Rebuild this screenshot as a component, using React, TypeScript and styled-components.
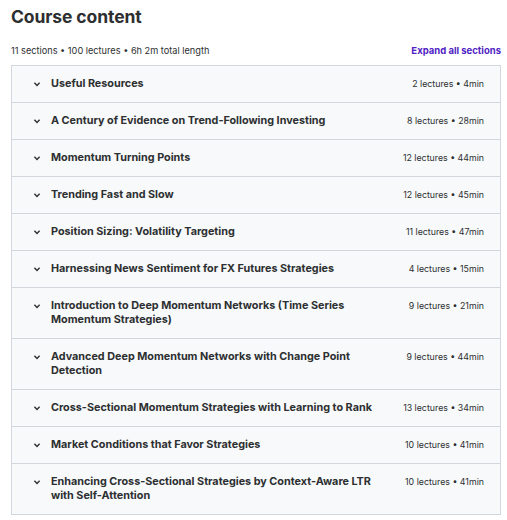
import styled, { createGlobalStyle } from "styled-components";

type Section = {
  title: string;
  lectures: number;
  minutes: number;
};

const sections: Section[] = [
  { title: "Useful Resources", lectures: 2, minutes: 4 },
  { title: "A Century of Evidence on Trend-Following Investing", lectures: 8, minutes: 28 },
  { title: "Momentum Turning Points", lectures: 12, minutes: 44 },
  { title: "Trending Fast and Slow", lectures: 12, minutes: 45 },
  { title: "Position Sizing: Volatility Targeting", lectures: 11, minutes: 47 },
  { title: "Harnessing News Sentiment for FX Futures Strategies", lectures: 4, minutes: 15 },
  {
    title: "Introduction to Deep Momentum Networks (Time Series Momentum Strategies)",
    lectures: 9,
    minutes: 21,
  },
  {
    title: "Advanced Deep Momentum Networks with Change Point Detection",
    lectures: 9,
    minutes: 44,
  },
  {
    title: "Cross-Sectional Momentum Strategies with Learning to Rank",
    lectures: 13,
    minutes: 34,
  },
  { title: "Market Conditions that Favor Strategies", lectures: 10, minutes: 41 },
  {
    title: "Enhancing Cross-Sectional Strategies by Context-Aware LTR with Self-Attention",
    lectures: 10,
    minutes: 41,
  },
];

const GlobalStyle = createGlobalStyle`
  body {
    margin: 0;
    background: #ffffff;
    color: #2d2f31;
    font-family: Inter, "Noto Sans", "Liberation Sans", sans-serif;
  }
`;

const Page = styled.div`
  padding: 6px 6px 0 11px;
`;

const Heading = styled.h2`
  margin: 0;
  font-size: 17.5px;
  font-weight: 700;
  line-height: 22px;
  letter-spacing: -0.1px;
`;

const Summary = styled.div`
  display: flex;
  justify-content: space-between;
  align-items: center;
  margin-top: 17px;
  margin-bottom: 8px;
  font-size: 9.2px;
  line-height: 12px;
`;

const ExpandButton = styled.button`
  background: none;
  border: none;
  padding: 0;
  font: inherit;
  font-size: 9.5px;
  font-weight: 700;
  color: #5022c3;
  cursor: pointer;
`;

const Accordion = styled.ul`
  list-style: none;
  margin: 0;
  padding: 0;
  border: 1px solid #d1d7dc;
`;

const Row = styled.li`
  display: flex;
  align-items: flex-start;
  gap: 9px;
  padding: 11px 16px 11px 20px;
  background: #f7f9fa;

  & + & {
    border-top: 1px solid #d1d7dc;
  }
`;

const Chevron = styled.svg`
  flex: none;
  width: 10px;
  height: 14px;
`;

const Title = styled.span`
  flex: 1;
  font-size: 10.8px;
  font-weight: 700;
  line-height: 14px;
`;

const Meta = styled.span`
  flex: none;
  margin-left: 16px;
  font-size: 8.8px;
  line-height: 14px;
`;

const App = () => {
  return (
    <Page>
      <GlobalStyle />
      <Heading>Course content</Heading>
      <Summary>
        <span>11 sections • 100 lectures • 6h 2m total length</span>
        <ExpandButton>Expand all sections</ExpandButton>
      </Summary>
      <Accordion>
        {sections.map((s) => (
          <Row key={s.title}>
            <Chevron viewBox="0 0 10 14">
              <path d="M2.4 5.8 L5 8.4 L7.6 5.8" fill="none" stroke="#2d2f31" strokeWidth="1.4" />
            </Chevron>
            <Title>{s.title}</Title>
            <Meta>
              {s.lectures} lectures • {s.minutes}min
            </Meta>
          </Row>
        ))}
      </Accordion>
    </Page>
  );
};

export default App;
